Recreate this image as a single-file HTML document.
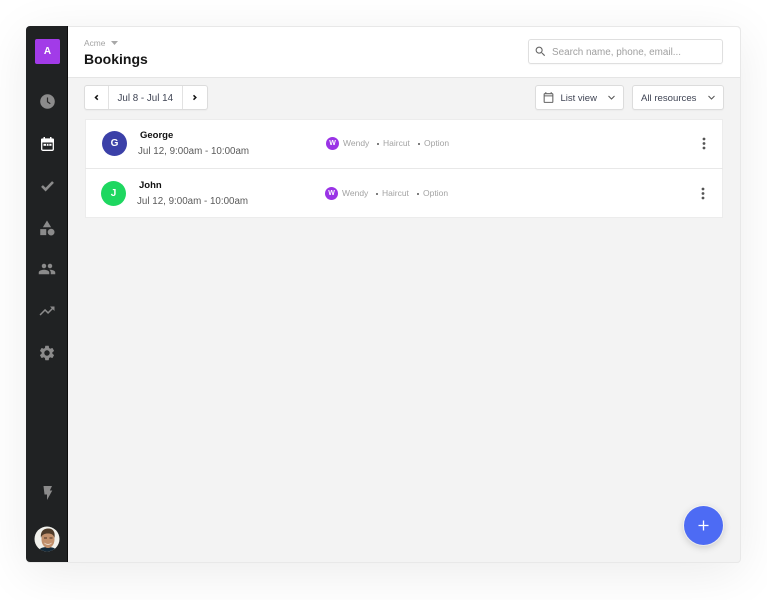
<!DOCTYPE html>
<html><head><meta charset="utf-8"><style>
*{box-sizing:border-box}
html,body{margin:0;width:767px;height:600px;overflow:hidden;background:#fff;font-family:"Liberation Sans",sans-serif}
.t{position:absolute;white-space:nowrap;line-height:14px}
.app{position:absolute;left:26px;top:26px;width:715px;height:537px;background:#f3f3f3;border:1px solid #e8e8e8;border-radius:4px;box-shadow:0 10px 50px rgba(0,0,0,.08)}
.side{position:absolute;left:26px;top:26px;width:42px;height:536px;background:#202223;border-right:1px solid #0c0c0c;border-radius:4px 0 0 4px}
.head{position:absolute;left:68px;top:27px;width:672px;height:51px;background:#fff;border-bottom:1px solid #e5e5e5;border-radius:0 4px 0 0}
.box{position:absolute;background:#fff;border:1px solid #dcdcdc;border-radius:3px;height:25px;box-shadow:0 1px 1px rgba(0,0,0,.03)}
svg{position:absolute}
.i{fill:#8b8b8b}
</style></head><body>
<div class="app"></div>
<div class="head"></div>
<div class="side"></div>

<div style="position:absolute;left:35px;top:39px;width:25px;height:25px;background:#a23be8;border-radius:2px;color:#fff;font:bold 10px/25px 'Liberation Sans',sans-serif;text-align:center">A</div>

<svg style="left:40px;top:94px" width="15" height="15" viewBox="0 0 15 15"><circle cx="7.500" cy="7.500" r="7.300" fill="#8b8b8b"/><path d="M7.500 3.500v4.300l2.800 1.900" fill="none" stroke="#2a2a2a" stroke-width="1.200"/></svg>
<svg style="left:41px;top:137px" width="13" height="14" viewBox="0 0 13 14"><rect x=".7" y="2" width="11.600" height="11.300" rx="1.200" fill="#202223" stroke="#fff" stroke-width="1.300"/><rect x="0" y="1.500" width="13" height="4" fill="#fff" rx="1"/><rect x="2.500" y="0" width="1.500" height="3" fill="#fff"/><rect x="9" y="0" width="1.500" height="3" fill="#fff"/><path d="M2.500 6.800h8v2h-8z" fill="#fff"/><path d="M5 6.800h.8v2H5zM7.500 6.800h.8v2h-.8z" fill="#202223"/></svg>
<svg style="left:40px;top:179px" width="15" height="14" viewBox="0 0 15 14"><path d="M2 7l3.600 3.600L13 3" fill="none" stroke="#8b8b8b" stroke-width="2.600"/></svg>
<svg class="i" style="left:38px;top:219px" width="18" height="18" viewBox="0 0 24 24"><path d="M12 2l-5.500 9h11z"/><circle cx="17.500" cy="17.500" r="4.500"/><rect x="3" y="13.500" width="8" height="8"/></svg>
<svg class="i" style="left:38px;top:260px" width="18" height="18" viewBox="0 0 24 24"><path d="M16 11c1.660 0 2.990-1.340 2.990-3S17.660 5 16 5c-1.660 0-3 1.340-3 3s1.340 3 3 3zm-8 0c1.660 0 2.990-1.340 2.990-3S9.660 5 8 5C6.340 5 5 6.340 5 8s1.340 3 3 3zm0 2c-2.330 0-7 1.170-7 3.500V19h14v-2.500c0-2.330-4.670-3.500-7-3.500zm8 0c-.290 0-.620.020-.970.050 1.160.840 1.970 1.970 1.970 3.450V19h6v-2.500c0-2.330-4.670-3.500-7-3.500z"/></svg>
<svg class="i" style="left:38px;top:302px" width="18" height="18" viewBox="0 0 24 24"><path d="M16 6l2.290 2.290-4.880 4.880-4-4L2 16.590 3.410 18l6-6 4 4 6.300-6.290L22 12V6z"/></svg>
<svg class="i" style="left:38px;top:344px" width="18" height="18" viewBox="0 0 24 24"><path d="M19.140 12.940c.040-.300.060-.610.060-.940 0-.320-.020-.640-.070-.940l2.030-1.580c.180-.140.230-.410.120-.610l-1.920-3.320c-.120-.220-.370-.290-.590-.220l-2.390.960c-.500-.380-1.030-.700-1.620-.940l-.360-2.540c-.040-.240-.240-.410-.480-.410h-3.840c-.240 0-.430.170-.470.410l-.360 2.540c-.590.240-1.130.570-1.620.940l-2.390-.960c-.220-.080-.470 0-.590.220L2.740 8.870c-.120.210-.080.470.120.610l2.030 1.580c-.050.300-.090.630-.090.940s.020.640.070.940l-2.030 1.580c-.180.140-.230.410-.120.610l1.920 3.320c.120.220.370.290.590.220l2.390-.960c.500.380 1.030.700 1.620.940l.360 2.540c.050.240.240.410.480.410h3.840c.240 0 .440-.170.470-.410l.360-2.540c.590-.240 1.130-.560 1.620-.940l2.390.960c.220.080.470 0 .590-.220l1.920-3.320c.120-.220.070-.470-.120-.610l-2.010-1.580zM12 15.600c-1.980 0-3.600-1.620-3.600-3.600s1.620-3.600 3.600-3.600 3.600 1.620 3.600 3.600-1.620 3.600-3.600 3.600z"/></svg>
<svg style="left:43px;top:486px" width="10" height="14" viewBox="0 0 10 14"><path d="M.5 0H9L6.800 4.500H9.300L4 14V8.500H1.500z" fill="#8b8b8b"/></svg>

<svg style="left:34px;top:526px" width="26" height="26" viewBox="0 0 26 26"><defs><clipPath id="c"><circle cx="13" cy="13" r="12.500"/></clipPath></defs><g clip-path="url(#c)"><rect width="26" height="26" fill="#f1f1ec"/><path d="M4 26c1-4 5-5 9.500-5s9 1 10 5z" fill="#142a3a"/><ellipse cx="14" cy="13.500" rx="6.500" ry="8.500" fill="#c1906c"/><path d="M7 12C6 5 10 2.500 14.500 2.500S21.500 6 20.500 12c-1-3.500-3-4.500-6.500-4.500S8 8.500 7 12z" fill="#4f3c2a"/><path d="M10 16.500c2 2 6 2 8 0-1 3-7 3-8 0z" fill="#f3ebe2"/><rect x="10" y="11.500" width="3" height="1" fill="#4a3526"/><rect x="15.500" y="11.500" width="3" height="1" fill="#4a3526"/></g></svg>

<div class="t" style="left:84px;top:36px;font-size:8.400px;color:#a3a3a3">Acme</div>
<svg style="left:111px;top:41px" width="7" height="4"><path d="M0 0h7L3.500 4z" fill="#a8a8a8"/></svg>
<div class="t" style="left:84px;top:50.500px;font-size:14px;line-height:16px;font-weight:bold;color:#161616">Bookings</div>

<div class="box" style="left:528px;top:39px;width:195px;height:25px;border-color:#dfdfdf"></div>
<svg style="left:534px;top:45px" width="13" height="13" viewBox="0 0 24 24" fill="#666"><path d="M15.500 14h-.790l-.280-.270C15.410 12.590 16 11.110 16 9.500 16 5.910 13.090 3 9.500 3S3 5.910 3 9.500 5.910 16 9.500 16c1.610 0 3.090-.590 4.230-1.570l.270.280v.790l5 4.990L20.490 19l-4.990-5zm-6 0C7.010 14 5 11.990 5 9.500S7.010 5 9.500 5 14 7.010 14 9.500 11.990 14 9.500 14z"/></svg>
<div class="t" style="left:552px;top:46px;font-size:9.900px;color:#a0a0a0">Search name, phone, email...</div>

<div class="box" style="left:84px;top:85px;width:124px"></div>
<div style="position:absolute;left:108px;top:86px;width:1px;height:23px;background:#e2e2e2"></div>
<div style="position:absolute;left:182px;top:86px;width:1px;height:23px;background:#e2e2e2"></div>
<svg style="left:92px;top:93px" width="9" height="9" viewBox="0 0 9 9"><path d="M5.800 2.300L3.500 4.500 5.800 6.700" fill="none" stroke="#111" stroke-width="1.500"/></svg>
<svg style="left:190px;top:93px" width="9" height="9" viewBox="0 0 9 9"><path d="M3.500 2.300l2.300 2.200L3.500 6.700" fill="none" stroke="#111" stroke-width="1.500"/></svg>
<div class="t" style="left:117.500px;top:92px;font-size:9.800px;color:#3f4454">Jul 8 - Jul 14</div>

<div class="box" style="left:535px;top:85px;width:89px"></div>
<svg style="left:542px;top:91px" width="13" height="13" viewBox="0 0 24 24" fill="#666"><path d="M19 4h-1V2h-2v2H8V2H6v2H5C3.900 4 3 4.900 3 6v14c0 1.100.9 2 2 2h14c1.100 0 2-.9 2-2V6c0-1.100-.9-2-2-2zm0 16H5V10h14zm0-12H5V6h14z"/></svg>
<div class="t" style="left:560.500px;top:92px;font-size:9.500px;color:#3f4454">List view</div>
<svg style="left:607px;top:94px" width="9" height="7"><path d="M1.500 2l3 3 3-3" fill="none" stroke="#555" stroke-width="1"/></svg>

<div class="box" style="left:632px;top:85px;width:92px"></div>
<div class="t" style="left:641px;top:92px;font-size:9.600px;color:#3f4454">All resources</div>
<svg style="left:707px;top:94px" width="9" height="7"><path d="M1.500 2l3 3 3-3" fill="none" stroke="#555" stroke-width="1"/></svg>

<div style="position:absolute;left:85px;top:119px;width:638px;height:99px;background:#fff;border:1px solid #ececec"></div>
<div style="position:absolute;left:85px;top:168px;width:638px;height:1px;background:#e8e8e8"></div>

<div style="position:absolute;left:102px;top:131px;width:25px;height:25px;border-radius:50%;background:#3b40a8;color:#fff;font:bold 10px/25px 'Liberation Sans',sans-serif;text-align:center">G</div>
<div class="t" style="left:140px;top:129px;font-size:9.500px;font-weight:bold;color:#111">George</div>
<div class="t" style="left:138px;top:145px;font-size:9.800px;color:#5a5a5a">Jul 12, 9:00am - 10:00am</div>
<div style="position:absolute;left:326px;top:137px;width:13px;height:13px;border-radius:50%;background:#9a33e6;color:#fff;font:bold 7px/13px 'Liberation Sans',sans-serif;text-align:center">W</div>
<div class="t" style="left:343px;top:136px;font-size:8.500px;color:#a3a3a3">Wendy</div>
<div style="position:absolute;left:377px;top:143px;width:2px;height:2px;background:#555;border-radius:50%"></div>
<div class="t" style="left:383px;top:136px;font-size:8.500px;color:#a3a3a3">Haircut</div>
<div style="position:absolute;left:418px;top:143px;width:2px;height:2px;background:#555;border-radius:50%"></div>
<div class="t" style="left:424px;top:136px;font-size:8.500px;color:#a3a3a3">Option</div>
<svg style="left:702px;top:137px" width="4" height="13"><circle cx="2" cy="2" r="1.400" fill="#555"/><circle cx="2" cy="6.500" r="1.400" fill="#555"/><circle cx="2" cy="11" r="1.400" fill="#555"/></svg>

<div style="position:absolute;left:101px;top:181px;width:25px;height:25px;border-radius:50%;background:#1ed760;color:#fff;font:bold 10px/25px 'Liberation Sans',sans-serif;text-align:center">J</div>
<div class="t" style="left:139px;top:179px;font-size:9.500px;font-weight:bold;color:#111">John</div>
<div class="t" style="left:137px;top:195px;font-size:9.800px;color:#5a5a5a">Jul 12, 9:00am - 10:00am</div>
<div style="position:absolute;left:325px;top:187px;width:13px;height:13px;border-radius:50%;background:#9a33e6;color:#fff;font:bold 7px/13px 'Liberation Sans',sans-serif;text-align:center">W</div>
<div class="t" style="left:342px;top:186px;font-size:8.500px;color:#a3a3a3">Wendy</div>
<div style="position:absolute;left:376px;top:193px;width:2px;height:2px;background:#555;border-radius:50%"></div>
<div class="t" style="left:382px;top:186px;font-size:8.500px;color:#a3a3a3">Haircut</div>
<div style="position:absolute;left:417px;top:193px;width:2px;height:2px;background:#555;border-radius:50%"></div>
<div class="t" style="left:423px;top:186px;font-size:8.500px;color:#a3a3a3">Option</div>
<svg style="left:701px;top:187px" width="4" height="13"><circle cx="2" cy="2" r="1.400" fill="#555"/><circle cx="2" cy="6.500" r="1.400" fill="#555"/><circle cx="2" cy="11" r="1.400" fill="#555"/></svg>

<div style="position:absolute;left:684px;top:506px;width:39px;height:39px;border-radius:50%;background:#4d6bf4;box-shadow:0 0 0 1px rgba(255,255,255,.5),0 2px 8px rgba(0,0,0,.2)"></div>
<svg style="left:698px;top:520px" width="11" height="11"><path d="M5.500 .5v10M.5 5.500h10" stroke="#fff" stroke-width="1.300"/></svg>
</body></html>
